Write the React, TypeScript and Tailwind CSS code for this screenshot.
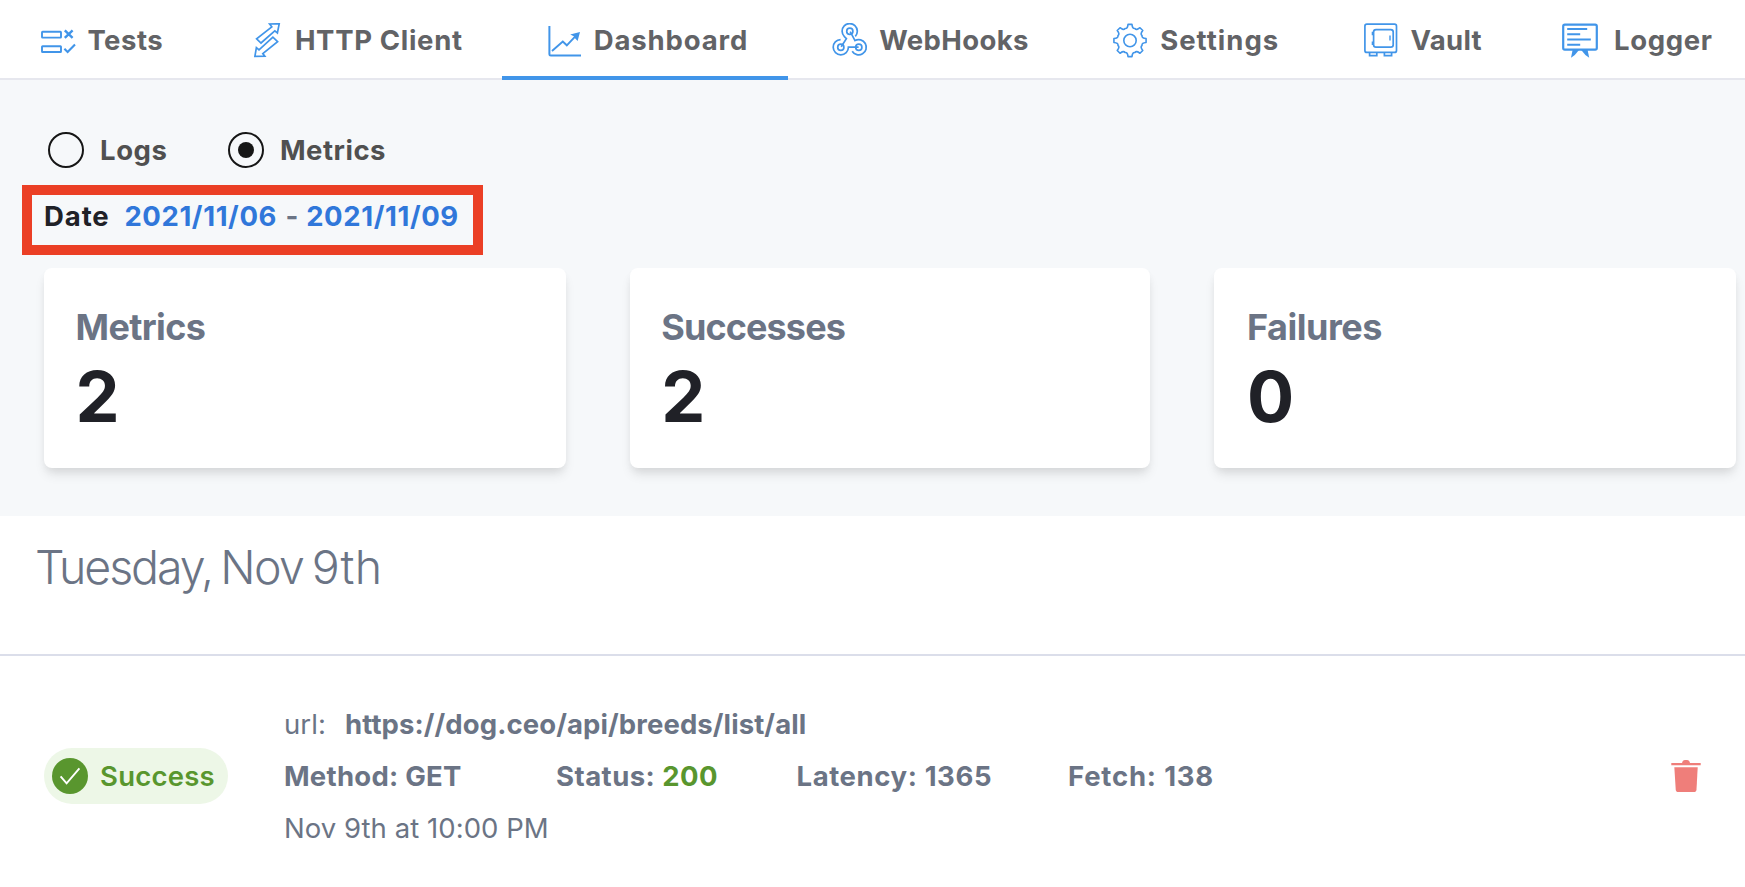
import React from "react";

const BLUE = "#4195e9";

function TestsIcon() {
  return (
    <svg className="w-[36px] h-[35px] shrink-0" viewBox="41 23 36 35" fill="none" stroke={BLUE} strokeWidth="1.9">
      <rect x="42" y="31.8" width="19" height="5.8" rx="0.6" />
      <rect x="42" y="46.2" width="19" height="5.8" rx="0.6" />
      <path d="M64.8 30.3l7.8 7.6M72.6 30.3l-7.8 7.6" strokeWidth="2.4" />
      <path d="M64.4 48.8l3.2 3.2 7.4-7.6" strokeWidth="2.1" />
    </svg>
  );
}

function HttpIcon() {
  return (
    <svg className="w-[28px] h-[35px] shrink-0" viewBox="254 23 28 35" fill="none" stroke={BLUE} strokeWidth="1.7">
      <path d="M279.2 23.8L269.6 24 271.8 26.8 256.6 38.8 261 43 274.8 30.8 277.4 33Z" />
      <path d="M254.9 56.4L256.4 47.6 259 49.8 272.9 37.2 277.6 41.6 262.8 53.6 264.8 56.2Z" />
    </svg>
  );
}

function DashboardIcon() {
  return (
    <svg className="w-[34px] h-[35px] shrink-0" viewBox="548 23 34 35" fill="none" stroke={BLUE}>
      <path d="M549.4 26V54.2Q549.4 55.6 550.8 55.6H581" strokeWidth="2" />
      <path d="M552 51L562.8 41.6 566.8 45.3 576 35.6" strokeWidth="1.9" />
      <path d="M580 32L570.2 34.4 573.8 36.2 574.8 38 577.6 41Z" fill={BLUE} stroke="none" />
    </svg>
  );
}

function WebhooksIcon() {
  return (
    <svg className="w-[36px] h-[35px] shrink-0" viewBox="832 23 36 35" fill="none" stroke={BLUE} strokeWidth="1.7">
      <circle cx="849.8" cy="31.2" r="3.1" />
      <circle cx="840.8" cy="47.2" r="3.1" />
      <circle cx="858.8" cy="47.2" r="3.1" />
      <path d="M855.3 36.3A7.6 7.6 0 1 0 844.4 36.6L846.4 38.6 841.2 46.8" />
      <path d="M840.6 39.6A7.6 7.6 0 1 0 848.4 47.2H858.6" />
      <path d="M852.2 51.2A7.6 7.6 0 1 0 855 40.6L850.2 31.6" />
    </svg>
  );
}

function gearPath(cx: number, cy: number) {
  const at = (deg: number, r: number) => {
    const a = ((deg - 90) * Math.PI) / 180;
    return `${(cx + r * Math.cos(a)).toFixed(2)} ${(cy + r * Math.sin(a)).toFixed(2)}`;
  };
  let d = `M${at(-7, 16.2)}`;
  for (let k = 0; k < 8; k++) {
    const b = k * 45;
    d += `L${at(b + 7, 16.2)}Q${at(b + 12, 11.8)} ${at(b + 22.5, 13)}Q${at(b + 33, 11.8)} ${at(b + 38, 16.2)}`;
  }
  return d + "Z";
}

function SettingsIcon() {
  return (
    <svg className="w-[34px] h-[35px] shrink-0" viewBox="1113 23 34 35" fill="none" stroke={BLUE} strokeWidth="1.6" strokeLinejoin="round">
      <path d={gearPath(1130, 40.5)} />
      <circle cx="1130" cy="40.5" r="6.2" />
    </svg>
  );
}

function VaultIcon() {
  return (
    <svg className="w-[34px] h-[35px] shrink-0" viewBox="1364 23 34 35" fill="none" stroke={BLUE} strokeWidth="1.7">
      <rect x="1364.9" y="24.2" width="31.6" height="28.2" rx="2" />
      <rect x="1373.6" y="29.6" width="19.6" height="17.6" rx="2.4" />
      <path d="M1390 35.4V40.6" strokeWidth="1.4" />
      <path d="M1372.8 31.8v3.4M1372.8 41.6v3.4" strokeWidth="2.2" />
      <path d="M1369.6 52.6V55.6H1376.8V52.6M1384.4 52.6V55.6H1391.6V52.6" />
    </svg>
  );
}

function LoggerIcon() {
  return (
    <svg className="w-[37px] h-[35px] shrink-0" viewBox="1562 23 37 35" fill="none" stroke={BLUE} strokeWidth="2.2">
      <rect x="1563.2" y="24.6" width="33.6" height="25" rx="1.6" />
      <path d="M1567.2 29.1h20M1567.2 34.2h13M1567.2 39.6h23.6M1567.2 44.8h13" strokeWidth="2" />
      <path d="M1572.6 50H1579L1574.8 55 1571 57.8Z" fill={BLUE} stroke="none" />
      <path d="M1587.6 50H1581.2L1585.4 55 1589.2 57.8Z" fill={BLUE} stroke="none" />
    </svg>
  );
}

function TrashIcon() {
  return (
    <svg className="w-[30px] h-[34px]" viewBox="1671 759 30 34" fill="#ef7e7a">
      <path d="M1682 763q0.6-3 3-3h2q2.4 0 3 3h10.7v2.2h-29.4V763z" />
      <path d="M1674.3 767.2h23.4l-1.2 22.2q-0.2 2.6-2.8 2.6h-15.2q-2.6 0-2.8-2.6z" />
    </svg>
  );
}

const tabs = [
  { label: "Tests", icon: <TestsIcon />, box: "w-[212px] pl-[41px] gap-[10.4px] tracking-[0.5px]" },
  { label: "HTTP Client", icon: <HttpIcon />, box: "w-[290px] pl-[42px] gap-[12.9px] tracking-[0.67px]" },
  { label: "Dashboard", icon: <DashboardIcon />, box: "w-[286px] pl-[46px] gap-[11.8px] tracking-[0.86px]", active: true },
  { label: "WebHooks", icon: <WebhooksIcon />, box: "w-[282px] pl-[44px] gap-[11.2px] tracking-[0.39px]" },
  { label: "Settings", icon: <SettingsIcon />, box: "w-[252px] pl-[43px] gap-[13.2px] tracking-[1.02px]" },
  { label: "Vault", icon: <VaultIcon />, box: "w-[200px] pl-[42px] gap-[12.6px] tracking-[0.27px]" },
  { label: "Logger", icon: <LoggerIcon />, box: "w-[223px] pl-[40px] gap-[15px] tracking-[0.65px]" },
];

const cards = [
  { title: "Metrics", value: "2", box: "pl-[31.5px] tracking-[-0.62px]" },
  { title: "Successes", value: "2", box: "pl-[31.2px] tracking-[-0.88px]" },
  { title: "Failures", value: "0", box: "pl-[33px] tracking-[-0.47px]" },
];

function Radio({ label, checked, className }: { label: string; checked?: boolean; className: string }) {
  return (
    <label className={`flex items-center gap-4 ${className}`}>
      <span className="flex size-9 items-center justify-center rounded-full border-2 border-[#161616]">
        {checked && <span className="size-4 rounded-full bg-[#161616]" />}
      </span>
      <span className="pt-px leading-[35px]">{label}</span>
    </label>
  );
}

export default function App() {
  return (
    <div className="h-[887px] w-[1745px] overflow-hidden bg-white font-['Inter',sans-serif] text-[27.5px] text-[#6b7485]">
      <nav className="flex h-20 border-b-2 border-[#e6e7ee] font-bold text-[#626366]">
        {tabs.map((t) => (
          <div
            key={t.label}
            className={`flex h-20 shrink-0 items-start border-b-4 pt-[23px] leading-[35px] ${t.box} ${t.active ? "border-[#4195e9]" : "border-transparent"}`}
          >
            {t.icon}
            <span className="whitespace-nowrap">{t.label}</span>
          </div>
        ))}
      </nav>

      <section className="h-[436px] bg-[#f6f8fa] pt-[52px]">
        <div className="flex h-9 pl-12 font-bold text-[#505050]">
          <Radio label="Logs" className="w-[180px] tracking-[0.6px]" />
          <Radio label="Metrics" checked className="tracking-[0.5px]" />
        </div>

        <div className="mt-[17px] ml-[22px] flex h-[70px] w-[461px] border-10 border-[#eb3f25] pl-[12px] leading-[42px] font-bold tracking-[0.61px] whitespace-nowrap">
          <span className="w-[80.4px] tracking-[0.9px] text-[#202127]">Date</span>
          <span className="w-[161px] text-[#3077da]">2021/11/06</span>
          <span className="w-[20.8px]">-</span>
          <span className="text-[#3077da]">2021/11/09</span>
        </div>

        <div className="mt-[13px] grid grid-cols-[522px_520px_522px] gap-16 pl-11">
          {cards.map((c) => (
            <div
              key={c.title}
              className={`h-[200px] rounded-lg bg-white pt-[38px] shadow-[0_8px_12px_-2px_rgba(0,0,0,0.1),0_4px_8px_-2px_rgba(0,0,0,0.06)] ${c.box}`}
            >
              <div className="text-[36px] leading-[42px] font-bold">{c.title}</div>
              <div className="mt-[13px] text-[70px] leading-[72px] font-bold text-[#202127]">{c.value}</div>
            </div>
          ))}
        </div>
      </section>

      <section className="h-[140px] border-b-2 border-[#dbdeea] pt-[23px] pl-[35px]">
        <h2 className="text-[46.5px] leading-[56px] font-light tracking-[-2.1px] [word-spacing:-2.6px]">
          Tuesday<span className="-ml-[2.5px]">,</span> <span className="tracking-[-1.6px]">Nov</span>{" "}
          <span className="tracking-[0.2px]">9th</span>
        </h2>
      </section>

      <section className="flex items-center pt-[42px] pr-[44px] pl-11 whitespace-nowrap">
        <div className="flex h-14 w-[184px] items-center gap-3 rounded-full bg-[#edf7e7] pl-2 font-semibold tracking-[0.24px] text-[#59962e]">
          <svg className="size-9 shrink-0" viewBox="52 758 36 36">
            <circle cx="70" cy="776" r="18" fill="#59962e" />
            <path d="M60.6 776.4L66.6 783.4 79.4 768.4" fill="none" stroke="#fff" strokeWidth="1.9" />
          </svg>
          <span className="pt-px">Success</span>
        </div>
        <div className="ml-14 leading-[52px]">
          <div className="flex">
            <span className="w-[61px] tracking-[0.1px]">url:</span>
            <span className="font-bold tracking-[0.1px]">https://dog.ceo/api/breeds/list/all</span>
          </div>
          <div className="flex font-bold">
            <span className="w-[272px] tracking-[0.25px]">Method: GET</span>
            <span className="w-[240.5px] tracking-[0.47px]">
              Status: <span className="text-[#59962e]">200</span>
            </span>
            <span className="w-[271.5px] tracking-[0.6px]">Latency: 1365</span>
            <span className="tracking-[0.8px]">Fetch: 138</span>
          </div>
          <div className="tracking-[0.05px]">Nov 9th at 10:00 PM</div>
        </div>
        <button className="ml-auto" aria-label="Delete">
          <TrashIcon />
        </button>
      </section>
    </div>
  );
}
